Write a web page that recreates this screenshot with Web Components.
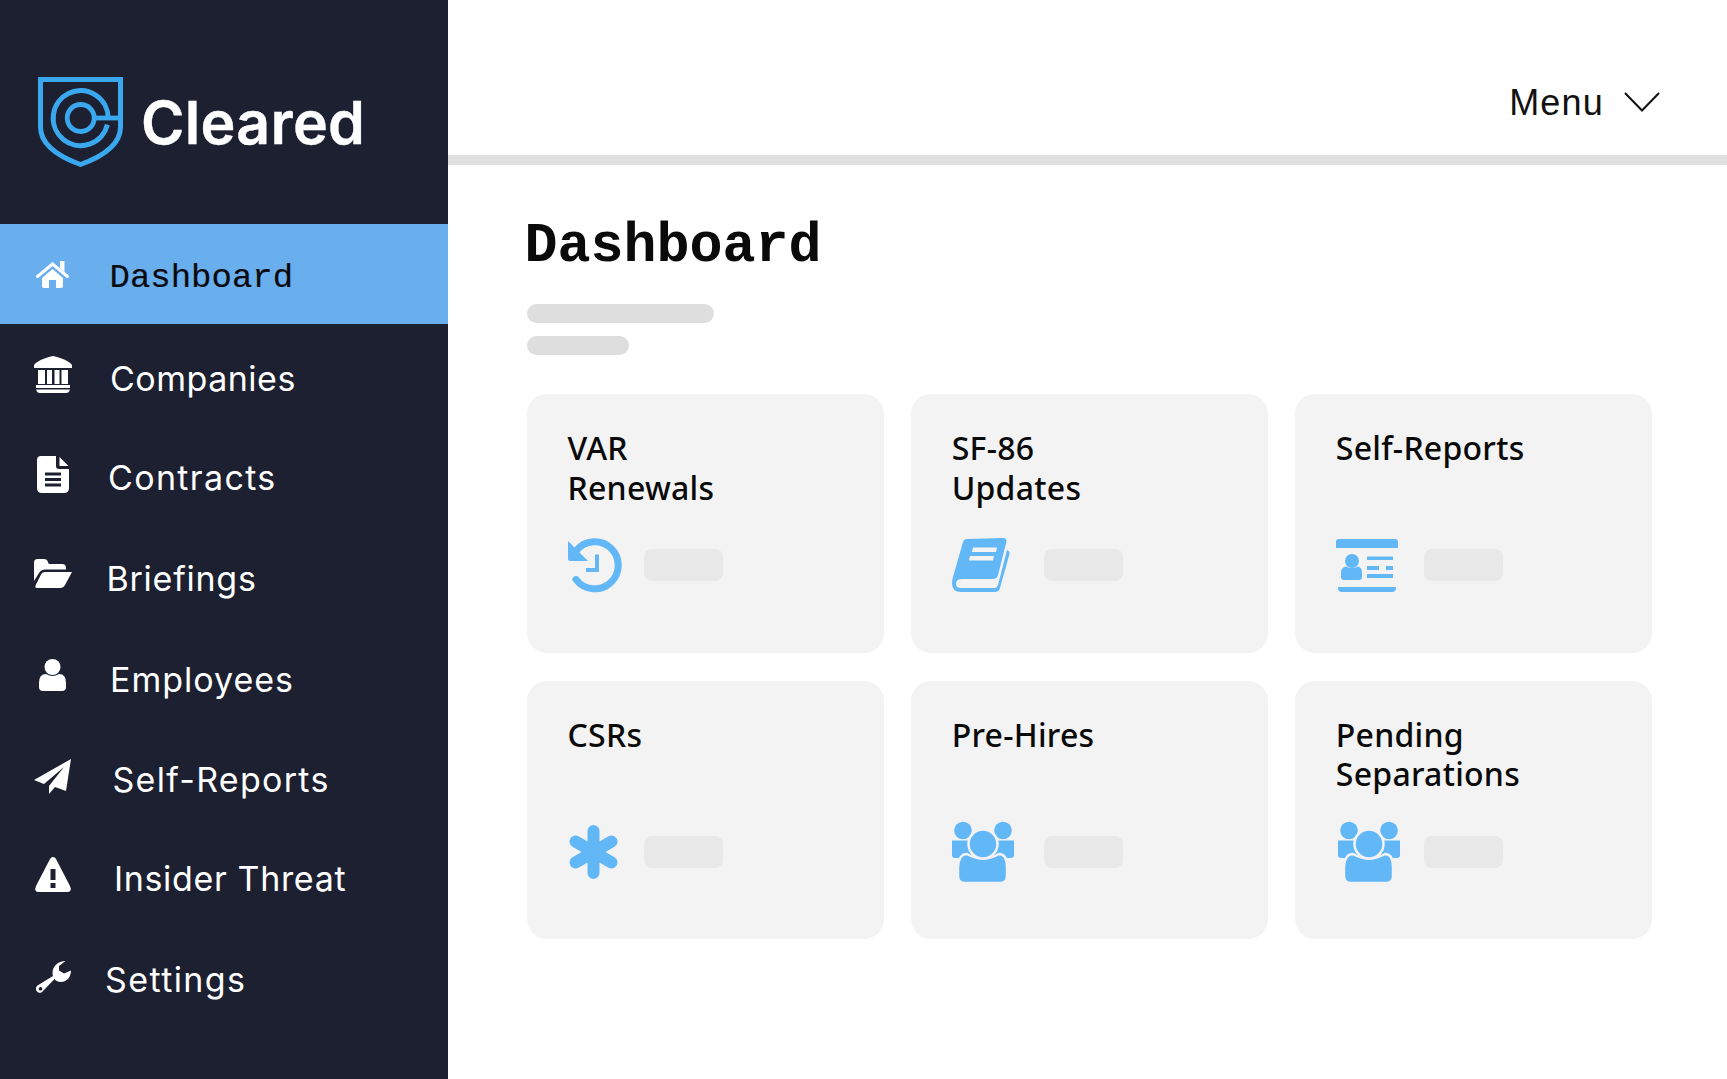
<!DOCTYPE html>
<html lang="en"><head><meta charset="utf-8"><title>Cleared Dashboard</title>
<style>html,body{margin:0;padding:0;background:#fff;overflow:hidden}</style></head>
<body>
<app-shell>
  <side-bar slot="side">
    <nav-item active icon="home" ix="36" tx="109.500" iy="0" ty="3.500" ls="0">Dashboard</nav-item>
    <nav-item icon="bank" ix="34" tx="110" iy="0.5" ty="5" ls="0.5">Companies</nav-item>
    <nav-item icon="file" ix="37" tx="108" iy="0.5" ty="4" ls="1.35">Contracts</nav-item>
    <nav-item icon="folder" ix="34" tx="106.500" iy="-0.5" ty="5" ls="0.75">Briefings</nav-item>
    <nav-item icon="user" ix="39" tx="110" iy="1" ty="6" ls="1">Employees</nav-item>
    <nav-item icon="plane" ix="34" tx="112.500" iy="2.5" ty="5.5" ls="1.3">Self-Reports</nav-item>
    <nav-item icon="warn" ix="35" tx="114" iy="0.5" ty="5" ls="0.65">Insider Threat</nav-item>
    <nav-item icon="wrench" ix="36" tx="105" iy="3" ty="6" ls="1.4">Settings</nav-item>
  </side-bar>
  <top-bar slot="top">Menu</top-bar>
  <page-head slot="main">Dashboard</page-head>
  <card-grid slot="main">
    <stat-card icon="history" slotw="76.500">VAR<br>Renewals</stat-card>
    <stat-card icon="book" slotw="92.500">SF-86<br>Updates</stat-card>
    <stat-card icon="idcard" slotw="88">Self-Reports</stat-card>
    <stat-card icon="asterisk" slotw="76.500" icon-x="1">CSRs</stat-card>
    <stat-card icon="group" slotw="92.500">Pre-Hires</stat-card>
    <stat-card icon="group" slotw="88" icon-x="2">Pending<br>Separations</stat-card>
  </card-grid>
</app-shell>
<script>
const ICONS={
home:[33,27,`<path d="M1.5 15.5 16.5 3 31.5 15.5" fill="none" stroke="currentColor" stroke-width="3" stroke-linecap="round" stroke-linejoin="miter"/><path d="M24 0h4.5v11L24 7zM6 17 16.5 8 27 17v8q0 2-2 2h-5v-8h-7v8H8q-2 0-2-2z"/>`],
bank:[38,37,`<path d="M19 0C28 2 35 5 38 9v3H0V9C3 5 10 2 19 0z"/><path d="M4 14h7v14H4zM13 14h5v14h-5zM20.500 14h5v14h-5zM27.500 14h6.500v14h-6.500zM2 29h34v3H2zM2 33.500h34q-1 3.500-4 3.500H6q-3 0-4-3.500z"/>`],
file:[32,37,`<path fill-rule="evenodd" d="M4 0H19V10q0 3 3 3H32V32q0 5-5 5H5q-5 0-5-5V4q0-4 4-4zM8 16.500V19.500H24V16.500zM8 22V25H24V22zM8 27.500V30.500H24V27.500z"/><path d="M22.500 1 31.500 10H22.500z"/>`],
folder:[38,29,`<path d="M0 3.500Q0 0 3.500 0H10q3 0 4 3l.8 2H28q4 0 4 4v1.500H11Q7 10.500 5 14L0 22z"/><path d="M10.500 13H38L31 26q-1.500 3-4 3H3.500Q0 29 2 25.500L7 15.500q1-2.500 3.500-2.500z"/>`],
user:[27,32,`<circle cx="13.500" cy="8" r="8"/><path d="M0 24Q0 15 7 15 13.500 19 20 15 27 15 27 24V28q0 4-4 4H4q-4 0-4-4z"/>`],
plane:[37,35,`<path d="M37 0 0 21 10 25 30 8 15 27V35L21 28 32 32z"/>`],
warn:[36,35,`<path fill-rule="evenodd" d="M18 0q2 0 3 2L35 29q2.500 6-3 6H4q-5.500 0-3-6L15 2q1-2 3-2zM15.500 12V23H20.500V12zM15.500 26V31H20.500V26z"/>`],
wrench:[35,32,`<path fill-rule="evenodd" d="M29.500 0C22 0 16.500 5 16.500 12q0 1.500.5 3L1.500 24.500C-.5 26-.5 29 1 30.500s4.500 2 6-.5L18.500 18q2 3 6.500 3c6 0 10-5 10-11.500L28 12.500 23 9.500V5zM4.500 26a1.800 1.800 0 1 0 .01 0z"/>`],
history:[53,54,`<path d="M8.500 12.500A23.500 23.500 0 1 1 8 41.500" fill="none" stroke="currentColor" stroke-width="7" stroke-linecap="round"/><path d="M0 3 20 23H2q-2 0-2-2z"/><path d="M27 16.500h4V34H18V30H27z"/>`],
book:[58,54,`<path fill-rule="evenodd" d="M15 1 51 0q4 0 3.500 3.500L46 37q-1 4-5 4H10Q4 41 4 46q0 4 5 4H43q2 0 3-3L55 12q3 1 2.500 4L48 50q-1 4-5 4H9Q0 54 0 45q0-3 1-6L11 4q1-3 4-3zM21 9.500 20 14H44L45 9.500zM18 18 17 22.500H41L42 18z"/>`],
idcard:[62,53,`<path d="M3 0H59q3 0 3 3V9H0V3Q0 0 3 0zM2 48H60V49q0 4-4 4H6Q2 53 2 49z"/><circle cx="16" cy="22" r="7"/><path d="M5 33.500Q5 28.500 10 27.500 16 30.500 22 27.500 26 28.500 26 33.500V38q0 3-3 3H8q-3 0-3-3zM31 17.500H57V21H31zM31 27H43V31H31zM50 27H57V31H50zM31 35H57V39H31z"/>`],
asterisk:[49,54,`<path d="M24.500 6V48M6.500 16.500 42.500 37.500M6.500 37.500 42.500 16.500" fill="none" stroke="currentColor" stroke-width="12" stroke-linecap="round"/>`],
group:[62,62,`<circle cx="11" cy="9.500" r="8.800"/><circle cx="51" cy="9.500" r="8.800"/><path d="M0 19.500H20V37H3Q0 37 0 34zM42 19.500H62V34q0 3-3 3H42z"/><path d="M6 46C6 39 9 33 15 33Q31 42 47 33C53 33 55 39 55 46V55q0 7-7 7H13q-7 0-7-7z" stroke="#f3f3f3" stroke-width="2.500"/><circle cx="31" cy="23" r="14.500" stroke="#f3f3f3" stroke-width="2.500"/>`]
};
function svg(n){const [w,h,d]=ICONS[n];return `<svg xmlns="http://www.w3.org/2000/svg" width="${w}" height="${h}" viewBox="0 0 ${w} ${h}" fill="currentColor" style="display:block;flex:none;overflow:visible">${d}</svg>`}

class AppShell extends HTMLElement{constructor(){super();this.attachShadow({mode:'open'}).innerHTML=`<style>
:host{display:flex;width:100%;height:1079px;overflow:hidden}
aside{flex:none;width:448px}
main{flex:1;min-width:0;display:flex;flex-direction:column}
.content{padding:0 74.500px 0 78.500px;display:flex;flex-direction:column}
</style><aside><slot name="side"></slot></aside><main><slot name="top"></slot><div class="content"><slot name="main"></slot></div></main>`}}

class SideBar extends HTMLElement{constructor(){super();this.attachShadow({mode:'open'}).innerHTML=`<style>
:host{display:block;height:1079px;background:#1c2030;color:#fff}
.brand{height:224px;box-sizing:border-box;padding:77px 0 0 38px;display:flex;gap:18px;align-items:flex-start}
.word{font:600 59px/1 Inter,Lato,sans-serif;color:#fff;letter-spacing:.3px;margin-top:16px;-webkit-text-stroke:.4px #fff}
nav{display:flex;flex-direction:column}
</style><div class="brand">
<svg width="85" height="90" viewBox="0 0 85 90" fill="none" stroke="#3aa8ef" style="flex:none;display:block">
<path d="M2.500 2.500H82.500V50C82.500 67 66 79 42.500 87.500 19 79 2.500 67 2.500 50z" stroke-width="5"/>
<path d="M70.200 41A27.500 27.500 0 1 0 69.400 47.700" stroke-width="5"/>
<circle cx="42.700" cy="41" r="13.500" stroke-width="4.800"/>
<path d="M56 41H82" stroke-width="4.800"/></svg>
<span class="word">Cleared</span></div><nav><slot></slot></nav>`}}

class NavItem extends HTMLElement{constructor(){super();this.attachShadow({mode:'open'})}
connectedCallback(){const g=a=>+this.getAttribute(a)||0,n=this.getAttribute('icon'),w=ICONS[n][0];
const act=this.hasAttribute('active');
this.shadowRoot.innerHTML=`<style>
:host{display:flex;align-items:center;height:100px;box-sizing:border-box;padding-left:${g('ix')}px;background:${act?'#69aeed':'transparent'};color:#fff}
.i{color:#fff;margin-top:${g('iy')*2}px}
.t{margin-left:${g('tx')-g('ix')-w}px;margin-top:${g('ty')*2}px;white-space:nowrap;
font:400 34px/40px ${act?'"Liberation Mono"':'Inter'},sans-serif;letter-spacing:${g('ls')}px;color:${act?'#0a0a0f':'#fff'};${act?'-webkit-text-stroke:.2px #0a0a0f;':''}}
</style><span class="i">${svg(n)}</span><span class="t"><slot></slot></span>`}}

class TopBar extends HTMLElement{constructor(){super();this.attachShadow({mode:'open'}).innerHTML=`<style>
:host{display:flex;justify-content:flex-end;align-items:center;gap:20px;box-sizing:content-box;height:155px;padding:0 67px 0 0;border-bottom:10px solid #e0e0e0;background:#fff;color:#111}
span{font:400 36px/40px "Liberation Sans",Arial,sans-serif;letter-spacing:1.2px;margin-top:50px}
svg{display:block;margin-top:49px}
</style><span><slot></slot></span><svg width="36" height="20" viewBox="0 0 36 20" fill="none" stroke="#111" stroke-width="2"><path d="M1 1 18 18.500 35 1"/></svg>`}}

class PageHead extends HTMLElement{constructor(){super();this.attachShadow({mode:'open'}).innerHTML=`<style>
:host{display:block;padding-top:50px}
h1{margin:0 0 0 -2px;font:700 55px/64px "Liberation Mono",monospace;color:#0a0a0a}
.a,.b{background:#dedede;border-radius:9.500px}
.a{width:187px;height:19px;margin-top:25px}
.b{width:102px;height:19px;margin-top:13px}
</style><h1><slot></slot></h1><div class="a"></div><div class="b"></div>`}}

class CardGrid extends HTMLElement{constructor(){super();this.attachShadow({mode:'open'}).innerHTML=`<style>
:host{display:grid;grid-template-columns:repeat(3,1fr);grid-auto-rows:258.500px;column-gap:26.500px;row-gap:28px;margin-top:39px}
</style><slot></slot>`}}

class StatCard extends HTMLElement{constructor(){super();this.attachShadow({mode:'open'})}
connectedCallback(){const n=this.getAttribute('icon'),sw=+this.getAttribute('slotw'),ix=+this.getAttribute('icon-x')||0;
this.shadowRoot.innerHTML=`<style>
:host{display:block;background:#f3f3f3;border-radius:20px;box-sizing:border-box;padding:34px 20px 0 41px;overflow:hidden}
.t{height:80px;font:500 32px/39.500px "Noto Sans",sans-serif;letter-spacing:.25px;color:#0a0a0a}
.r{display:flex;align-items:center;height:64px;margin-top:25px}
.ic{flex:none;width:${sw-ix}px;margin-left:${ix}px;color:#62b7f7}
.ph{flex:none;width:79px;height:32px;border-radius:8px;background:#e8e8e8}
</style><div class="t"><slot></slot></div><div class="r"><div class="ic">${svg(n)}</div><div class="ph"></div></div>`}}

customElements.define('app-shell',AppShell);
customElements.define('side-bar',SideBar);
customElements.define('nav-item',NavItem);
customElements.define('top-bar',TopBar);
customElements.define('page-head',PageHead);
customElements.define('card-grid',CardGrid);
customElements.define('stat-card',StatCard);
</script>
</body></html>
